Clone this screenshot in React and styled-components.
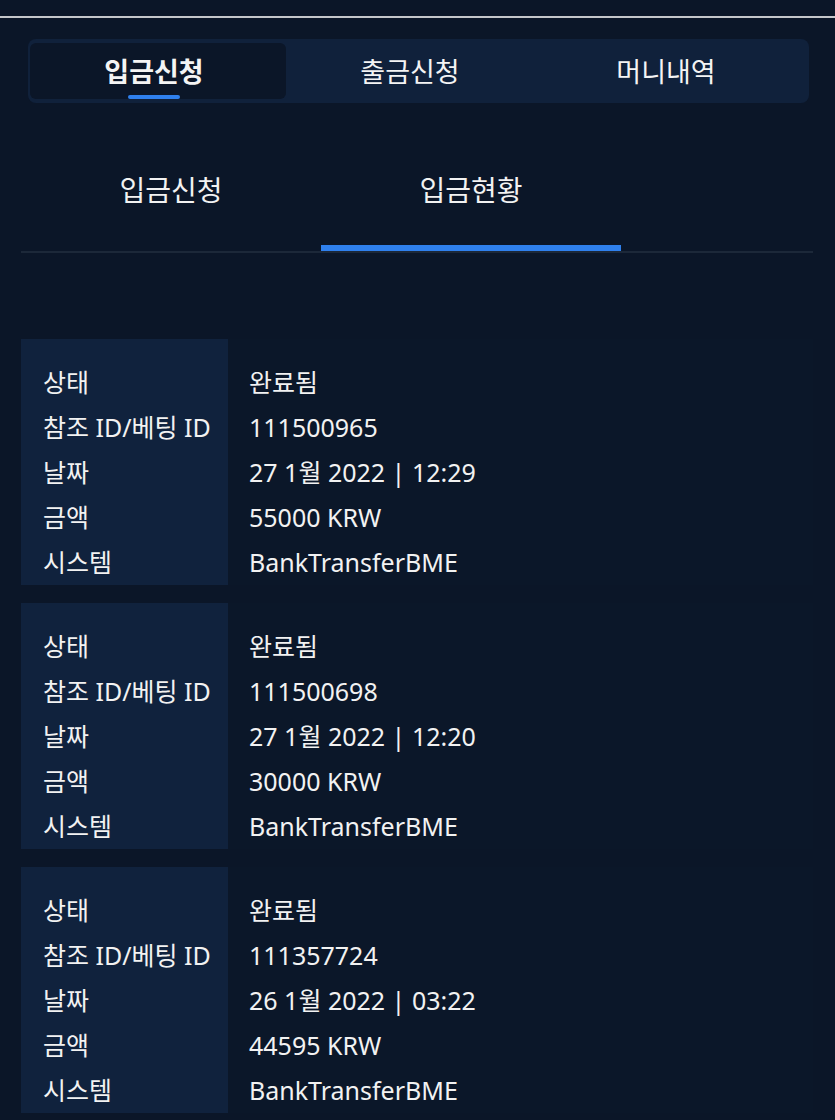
import React, { useState } from "react";
import styled, { createGlobalStyle } from "styled-components";

const Global = createGlobalStyle`
  html, body { margin: 0; padding: 0; background: #0b1628; }
  body {
    font-family: "Noto Sans", "Noto Sans CJK KR", sans-serif;
    color: #f2f2f2;
  }
  * { box-sizing: border-box; }
`;

const Page = styled.div`
  width: 835px;
  min-height: 1120px;
  background: #0b1628;
  padding: 16px 0 0;
  font-family: "Noto Sans CJK KR", "Noto Sans", sans-serif;
`;

const TopRule = styled.div`
  height: 2px;
  background: #c4c6ca;
`;

const Content = styled.div`
  padding: 21px 22px 0 21px;
`;

const Segment = styled.div`
  margin: 0 4px 0 7px;
  height: 64px;
  padding: 4px 2px;
  border-radius: 8px;
  background: #10213b;
  display: grid;
  grid-template-columns: repeat(3, 256px);
`;

const SegButton = styled.button`
  position: relative;
  border: none;
  border-radius: 6px;
  background: ${(p) => (p.$active ? "#0b1628" : "transparent")};
  color: #f4f4f4;
  font-family: "Noto Sans CJK KR", sans-serif;
  font-size: 27px;
  font-weight: ${(p) => (p.$active ? 700 : 400)};
  cursor: pointer;
  padding: 0 8px 2px 0;
  &::after {
    content: "";
    display: ${(p) => (p.$active ? "block" : "none")};
    position: absolute;
    left: 98px;
    bottom: 0;
    width: 52px;
    height: 4px;
    border-radius: 2px;
    background: #2f80ed;
  }
`;

const SubTabs = styled.div`
  margin-top: 36px;
  display: flex;
  border-bottom: 2px solid #1c2839;
`;

const SubTab = styled.button`
  width: 300px;
  border: none;
  background: transparent;
  color: #f2f2f2;
  font-family: "Noto Sans CJK KR", sans-serif;
  font-size: 28px;
  line-height: 36px;
  padding: 32px 0 38px;
  border-bottom: 6px solid ${(p) => (p.$active ? "#2f80ed" : "transparent")};
  cursor: pointer;
`;

const List = styled.div`
  margin-top: 86px;
  display: flex;
  flex-direction: column;
  gap: 18px;
`;

const Card = styled.div`
  display: flex;
  background: #0b1729;
`;

const LabelCol = styled.div`
  width: 207px;
  flex: none;
  background: #10223d;
  padding: 21px 0 0 22px;
`;

const ValueCol = styled.div`
  flex: 1;
  padding: 21px 0 0 21px;
`;

const Line = styled.div`
  height: 45px;
  line-height: 45px;
  font-size: 25px;
  color: #f2f2f2;
  white-space: nowrap;
  font-family: "Noto Sans", "Noto Sans CJK KR", sans-serif;
`;

const labels = ["상태", "참조 ID/베팅 ID", "날짜", "금액", "시스템"];

const records = [
  ["완료됨", "111500965", "27 1월 2022 | 12:29", "55000 KRW", "BankTransferBME"],
  ["완료됨", "111500698", "27 1월 2022 | 12:20", "30000 KRW", "BankTransferBME"],
  ["완료됨", "111357724", "26 1월 2022 | 03:22", "44595 KRW", "BankTransferBME"],
];

export default function App() {
  const [seg, setSeg] = useState(0);
  const [sub, setSub] = useState(1);
  return (
    <Page>
      <Global />
      <TopRule />
      <Content>
        <Segment>
          {["입금신청", "출금신청", "머니내역"].map((t, i) => (
            <SegButton key={t} $active={seg === i} onClick={() => setSeg(i)}>
              {t}
            </SegButton>
          ))}
        </Segment>
        <SubTabs>
          {["입금신청", "입금현황"].map((t, i) => (
            <SubTab key={t} $active={sub === i} onClick={() => setSub(i)}>
              {t}
            </SubTab>
          ))}
        </SubTabs>
        <List>
          {records.map((r, idx) => (
            <Card key={idx}>
              <LabelCol>
                {labels.map((l) => (
                  <Line key={l}>{l}</Line>
                ))}
              </LabelCol>
              <ValueCol>
                {r.map((v, j) => (
                  <Line key={j}>{v}</Line>
                ))}
              </ValueCol>
            </Card>
          ))}
        </List>
      </Content>
    </Page>
  );
}
